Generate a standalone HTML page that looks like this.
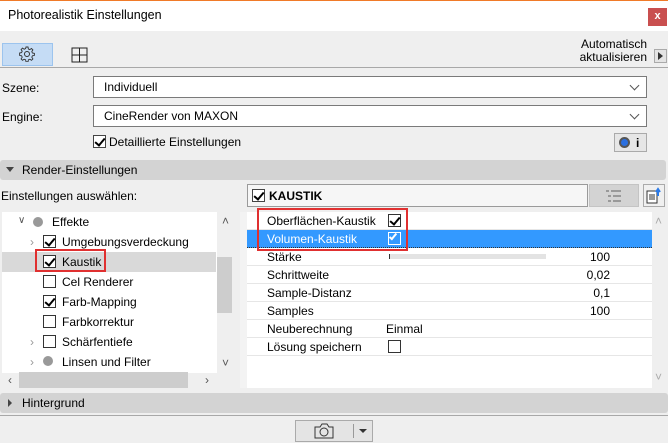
<!DOCTYPE html>
<html><head><style>
*{box-sizing:border-box;margin:0;padding:0}
body{width:668px;height:443px;overflow:hidden;background:#efefef;font-family:"Liberation Sans",sans-serif;font-size:12px;color:#000;position:relative}
.a{position:absolute}
.t{position:absolute;white-space:nowrap;line-height:14px}
.cb{position:absolute;width:13px;height:13px;border:1px solid #333;background:#fff}
.chk::after{content:"";position:absolute;left:3px;top:0px;width:4px;height:8px;border:solid #000;border-width:0 2px 2px 0;transform:rotate(40deg)}
.row{position:absolute;left:247px;width:405px;height:18px;border-bottom:1px solid #e6e6e6}
.dd{position:absolute;left:93px;width:554px;height:22px;background:#fff;border:1px solid #7a7a7a}
.chev{position:absolute;right:8px;top:5px;width:7px;height:7px;border:solid #555;border-width:0 1px 1px 0;transform:rotate(45deg)}
</style></head><body>
<div class="a" style="left:0;top:0;width:668px;height:31px;background:#fff;border-top:1px solid #f07a28"></div>
<div class="t" style="left:8px;top:8px;font-size:12.5px">Photorealistik Einstellungen</div>
<div class="a" style="left:648px;top:8px;width:19px;height:18px;background:#c94f4f;color:#fff;font-size:11px;text-align:center;line-height:17px;font-weight:bold">x</div>

<div class="a" style="left:2px;top:43px;width:51px;height:23px;background:#c5dcf5;border:1px solid #9cc4ee"></div>
<svg class="a" style="left:19px;top:46px" width="16" height="16" viewBox="0 0 16 16"><circle cx="8" cy="8" r="2.5" fill="none" stroke="#333"/><path d="M7 1h2l.4 2 1.4.6 1.7-1.1 1.4 1.4-1.1 1.7.6 1.4 2 .4v2l-2 .4-.6 1.4 1.1 1.7-1.4 1.4-1.7-1.1-1.4.6-.4 2H7l-.4-2-1.4-.6-1.7 1.1-1.4-1.4 1.1-1.7-.6-1.4-2-.4V7l2-.4.6-1.4-1.1-1.7 1.4-1.4 1.7 1.1 1.4-.6z" fill="none" stroke="#333" stroke-width=".9"/></svg>
<svg class="a" style="left:71px;top:47px" width="17" height="16" viewBox="0 0 17 16"><rect x="1" y="1" width="15" height="14" fill="none" stroke="#222"/><path d="M1 8h15M8.5 1v14" stroke="#222"/></svg>
<div class="t" style="right:21px;top:38px;text-align:right;line-height:13px">Automatisch<br>aktualisieren</div>
<div class="a" style="left:654px;top:49px;width:13px;height:14px;border:1px solid #aaa;background:#e4e4e4"></div>
<div class="a" style="left:658px;top:52px;border-left:5px solid #333;border-top:4px solid transparent;border-bottom:4px solid transparent"></div>
<div class="a" style="left:0;top:67px;width:668px;height:1px;background:#a8a8a8"></div>

<div class="t" style="left:2px;top:81px">Szene:</div>
<div class="dd" style="top:76px"><div class="t" style="left:10px;top:3px">Individuell</div><div class="chev"></div></div>
<div class="t" style="left:2px;top:110px">Engine:</div>
<div class="dd" style="top:105px"><div class="t" style="left:10px;top:3px">CineRender von MAXON</div><div class="chev"></div></div>
<div class="cb chk" style="left:93px;top:135px;border-color:#444"></div>
<div class="t" style="left:109px;top:135px">Detaillierte Einstellungen</div>
<div class="a" style="left:614px;top:133px;width:33px;height:19px;border:1px solid #aaa;background:#e6e6e6"></div>
<div class="a" style="left:619px;top:137px;width:11px;height:11px;border-radius:50%;border:2px solid #555;background:#2a6fe0"></div>
<div class="t" style="left:636px;top:136px;font-weight:bold">i</div>

<div class="a" style="left:0;top:160px;width:666px;height:20px;background:#d3d3d3;border-radius:3px"></div>
<div class="a" style="left:6px;top:167px;border-top:5px solid #444;border-left:4px solid transparent;border-right:4px solid transparent"></div>
<div class="t" style="left:22px;top:163px">Render-Einstellungen</div>
<div class="t" style="left:1px;top:189px">Einstellungen auswählen:</div>

<div class="a" style="left:2px;top:212px;width:215px;height:161px;background:#fff"></div>
<div class="a" style="left:2px;top:252px;width:214px;height:20px;background:#d9d9d9"></div>
<div class="a" style="left:217px;top:257px;width:15px;height:56px;background:#cdcdcd"></div>
<div class="t" style="left:222px;top:214px;color:#555">˄</div>
<div class="t" style="left:222px;top:356px;color:#555">˅</div>
<div class="a" style="left:19px;top:372px;width:169px;height:16px;background:#cdcdcd"></div>
<div class="t" style="left:8px;top:373px;color:#555">‹</div>
<div class="t" style="left:205px;top:373px;color:#555">›</div>
<div class="t" style="left:18px;top:214px;color:#555;font-size:10px">∨</div>
<div class="a" style="left:33px;top:217px;width:10px;height:10px;border-radius:50%;background:#999"></div>
<div class="t" style="left:52px;top:215px">Effekte</div>
<div class="t" style="left:30px;top:235px;color:#999">›</div>
<div class="cb chk" style="left:43px;top:235px"></div><div class="t" style="left:62px;top:235px">Umgebungsverdeckung</div>
<div class="cb chk" style="left:43px;top:255px"></div><div class="t" style="left:62px;top:255px">Kaustik</div>
<div class="a" style="left:35px;top:249px;width:71px;height:23px;border:2px solid #e03030"></div>
<div class="cb" style="left:43px;top:275px"></div><div class="t" style="left:62px;top:275px">Cel Renderer</div>
<div class="cb chk" style="left:43px;top:295px"></div><div class="t" style="left:62px;top:295px">Farb-Mapping</div>
<div class="cb" style="left:43px;top:315px"></div><div class="t" style="left:62px;top:315px">Farbkorrektur</div>
<div class="t" style="left:30px;top:335px;color:#999">›</div>
<div class="cb" style="left:43px;top:335px"></div><div class="t" style="left:62px;top:335px">Schärfentiefe</div>
<div class="t" style="left:30px;top:355px;color:#999">›</div>
<div class="a" style="left:43px;top:356px;width:10px;height:10px;border-radius:50%;background:#999"></div>
<div class="t" style="left:62px;top:355px">Linsen und Filter</div>

<div class="a" style="left:247px;top:184px;width:341px;height:23px;border:1px solid #9a9a9a;background:#f6f6f6"></div>
<div class="cb chk" style="left:252px;top:189px;border-color:#444"></div>
<div class="t" style="left:269px;top:189px;font-weight:bold">KAUSTIK</div>
<div class="a" style="left:589px;top:184px;width:50px;height:23px;background:#d3d3d3;border:1px solid #c4c4c4"></div>
<svg class="a" style="left:606px;top:190px" width="16" height="12"><path d="M0 1h3M5 1h10M2 6h3M7 6h8M2 11h3M7 11h8" stroke="#999" stroke-width="2"/></svg>
<div class="a" style="left:643px;top:184px;width:22px;height:23px;border:1px solid #aaa;background:#f0f0f0"></div>
<svg class="a" style="left:646px;top:187px" width="17" height="17"><rect x="1" y="4" width="10" height="12" fill="#fff" stroke="#333"/><path d="M3 8h6M3 10h6M3 12h6" stroke="#333"/><path d="M12 9V3M10 5l2-3 2 3" stroke="#2a7ae8" stroke-width="2" fill="none"/></svg>

<div class="a" style="left:240px;top:212px;width:7px;height:176px;background:#f3f3f3"></div>
<div class="a" style="left:247px;top:212px;width:405px;height:176px;background:#fff"></div>
<div class="t" style="left:655px;top:214px;color:#aaa">˄</div>
<div class="t" style="left:655px;top:370px;color:#aaa">˅</div>
<div class="row" style="top:212px"></div>
<div class="t" style="left:267px;top:214px">Oberflächen-Kaustik</div>
<div class="cb chk" style="left:388px;top:214px"></div>
<div class="a" style="left:247px;top:230px;width:405px;height:18px;background:#3399ff;border-bottom:1px dotted #333"></div>
<div class="t" style="left:267px;top:232px;color:#fff">Volumen-Kaustik</div>
<div class="cb" style="left:388px;top:232px;border-color:#fff;background:#3399ff"></div>
<div class="a" style="left:391px;top:232px;width:4px;height:8px;border:solid #fff;border-width:0 2px 2px 0;transform:rotate(40deg)"></div>
<div class="row" style="top:248px"></div><div class="t" style="left:267px;top:250px">Stärke</div>
<div class="a" style="left:389px;top:254px;width:157px;height:5px;background:#e3e3e3;border-left:1px solid #333"></div>
<div class="t" style="left:560px;top:250px;width:50px;text-align:right">100</div>
<div class="row" style="top:266px"></div><div class="t" style="left:267px;top:268px">Schrittweite</div><div class="t" style="left:560px;top:268px;width:50px;text-align:right">0,02</div>
<div class="row" style="top:284px"></div><div class="t" style="left:267px;top:286px">Sample-Distanz</div><div class="t" style="left:560px;top:286px;width:50px;text-align:right">0,1</div>
<div class="row" style="top:302px"></div><div class="t" style="left:267px;top:304px">Samples</div><div class="t" style="left:560px;top:304px;width:50px;text-align:right">100</div>
<div class="row" style="top:320px"></div><div class="t" style="left:267px;top:322px">Neuberechnung</div><div class="t" style="left:386px;top:322px">Einmal</div>
<div class="row" style="top:338px"></div><div class="t" style="left:267px;top:340px">Lösung speichern</div><div class="cb" style="left:388px;top:340px"></div>
<div class="a" style="left:257px;top:208px;width:151px;height:43px;border:2px solid #e03030"></div>

<div class="a" style="left:0;top:393px;width:668px;height:20px;background:#d3d3d3;border-radius:3px"></div>
<div class="a" style="left:8px;top:399px;border-left:4px solid #444;border-top:4px solid transparent;border-bottom:4px solid transparent"></div>
<div class="t" style="left:22px;top:396px">Hintergrund</div>
<div class="a" style="left:0;top:415px;width:668px;height:1px;background:#a8a8a8"></div>
<div class="a" style="left:295px;top:420px;width:78px;height:22px;border:1px solid #aaa;background:#e4e4e4"></div>
<svg class="a" style="left:314px;top:422px" width="20" height="18"><path d="M1 5h5l2-3h5l2 3h4v11H1z" fill="none" stroke="#333"/><circle cx="10" cy="10" r="4" fill="none" stroke="#333"/></svg>
<div class="a" style="left:353px;top:424px;width:1px;height:14px;background:#999"></div>
<div class="a" style="left:359px;top:429px;border-top:4px solid #333;border-left:4px solid transparent;border-right:4px solid transparent"></div>
</body></html>
